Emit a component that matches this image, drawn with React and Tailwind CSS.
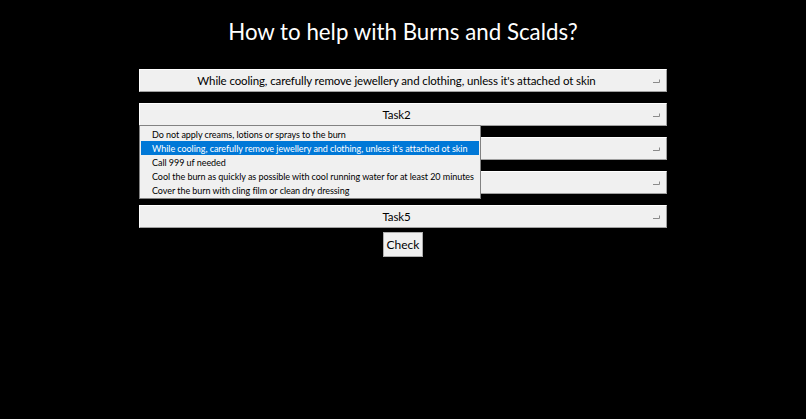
import React from "react";

const font = { fontFamily: '"Comic Sans MS", Lato, "DejaVu Sans", sans-serif' };

function Arrow() {
  return (
    <svg width="7" height="4" viewBox="0 0 7 4" className="absolute right-[6px] top-[9px]">
      <path d="M0 3.5 H6.5 V0.5" fill="none" stroke="#8a8a8a" strokeWidth="1" />
    </svg>
  );
}

function Combo({ label }) {
  return (
    <div className="relative h-[23px] w-[528px] pr-[13px] bg-[#f0f0f0] border border-t-[#ffffff] border-l-[#ffffff] border-b-[#a0a0a0] border-r-[#a0a0a0] flex items-center justify-center">
      <span className="text-[11.5px] tracking-[-0.12px] leading-none text-black">{label}</span>
      <Arrow />
    </div>
  );
}

const items = [
  "Do not apply creams, lotions or sprays to the burn",
  "While cooling, carefully remove jewellery and clothing, unless it's attached ot skin",
  "Call 999 uf needed",
  "Cool the burn as quickly as possible with cool running water for at least 20 minutes",
  "Cover the burn with cling film or clean dry dressing",
];

export default function App() {
  return (
    <div className="w-[806px] h-[419px] bg-black flex flex-col items-center" style={font}>
      <h1 className="mt-[18px] text-[22.3px] leading-[28px] text-white">How to help with Burns and Scalds?</h1>
      <div className="relative mt-[23px] flex flex-col gap-[11px]">
        <Combo label="While cooling, carefully remove jewellery and clothing, unless it's attached ot skin" />
        <Combo label="Task2" />
        <Combo label="" />
        <Combo label="" />
        <Combo label="Task5" />
        <div className="absolute left-0 top-[56px] w-[342px] bg-[#f0f0f0] border border-[#828282] py-[1px] px-[1px] flex flex-col">
          {items.map((t, i) => (
            <div
              key={i}
              className={`h-[14px] flex items-center pl-[11px] text-[9px] tracking-[-0.05px] leading-none whitespace-nowrap ${i === 1 ? "bg-[#0078d7] text-white" : "text-black"}`}
            >
              {t}
            </div>
          ))}
        </div>
      </div>
      <button className="mt-[4px] w-[40px] h-[25px] bg-[#f0f0f0] border border-[#adadad] text-[12px] leading-none text-black">
        Check
      </button>
    </div>
  );
}
